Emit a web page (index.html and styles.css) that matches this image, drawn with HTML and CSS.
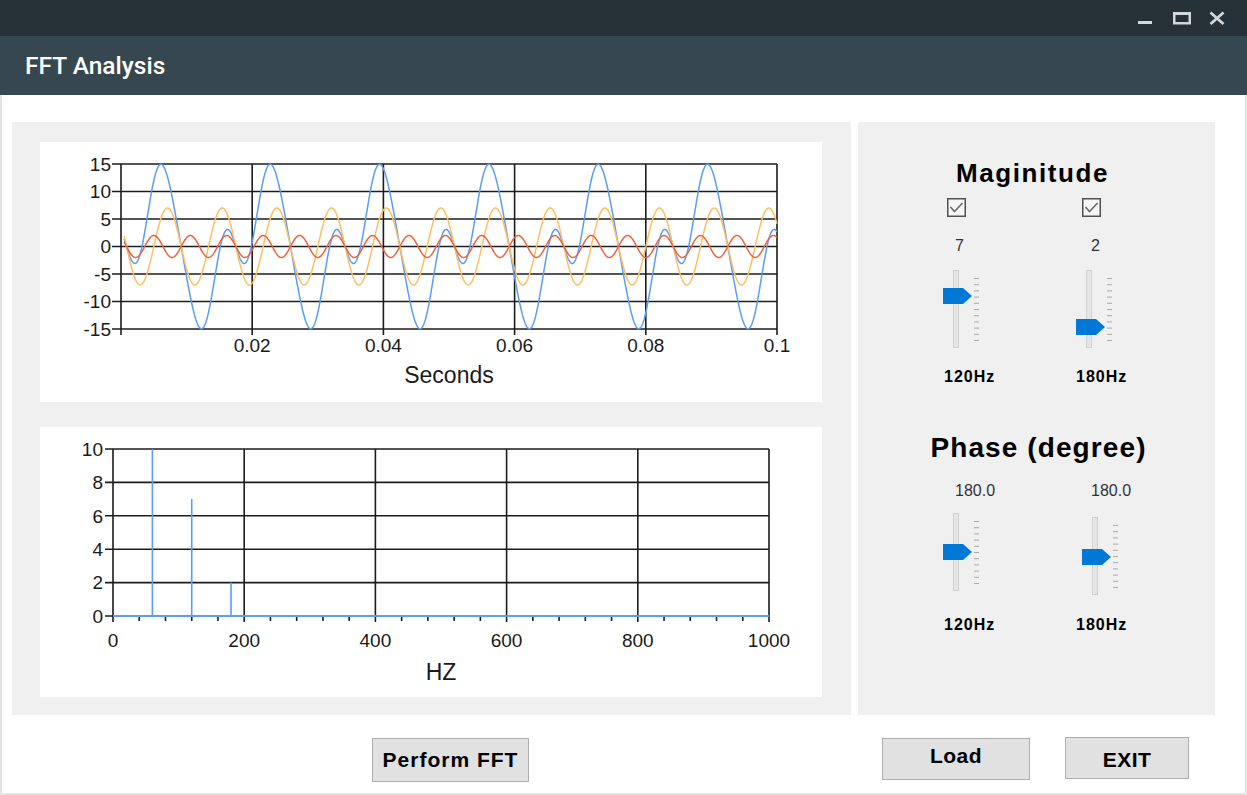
FILE: index.html
```html
<!DOCTYPE html>
<html lang="en">
<head>
<meta charset="utf-8">
<title>FFT Analysis</title>
<link rel="stylesheet" href="styles.css">
</head>
<body>
<div class="window">
  <div class="sysbar">
    <svg class="sys-icons" width="100" height="36" viewBox="0 0 100 36" aria-hidden="true">
      <rect x="8" y="21" width="14" height="3" fill="#d3d8da"/>
      <rect x="44.25" y="13.25" width="15.5" height="10" fill="none" stroke="#d3d8da" stroke-width="2.5"/>
      <rect x="43" y="12" width="18" height="3" fill="#d3d8da"/>
      <path d="M80.5 12.5L93.5 24M93.5 12.5L80.5 24" stroke="#d3d8da" stroke-width="2.8" fill="none"/>
    </svg>
  </div>
  <header class="titlebar">
    <h1 class="app-title">FFT Analysis</h1>
  </header>
  <main class="client">
    <div class="panels">
      <section class="charts">
        <div class="chart chart-time">
          <svg class="plot" width="782" height="260" viewBox="0 0 782 260">
            <g class="grid">
              <path d="M72 22H737M72 49.5H737M72 77H737M72 104.5H737M72 132H737M72 159.5H737M72 187H737"/>
              <path d="M81 22V193M212.2 22V193M343.4 22V193M474.6 22V193M605.8 22V193M737 22V193"/>
            </g>
            <g class="ylabels">
              <text x="71" y="28.8">15</text>
              <text x="71" y="56.3">10</text>
              <text x="71" y="83.8">5</text>
              <text x="71" y="111.3">0</text>
              <text x="71" y="138.8">-5</text>
              <text x="71" y="166.3">-10</text>
              <text x="71" y="193.8">-15</text>
            </g>
            <g class="xlabels">
              <text x="212.2" y="210">0.02</text>
              <text x="343.4" y="210">0.04</text>
              <text x="474.6" y="210">0.06</text>
              <text x="605.8" y="210">0.08</text>
              <text x="737" y="210">0.1</text>
            </g>
            <text class="axis-title" x="409" y="241">Seconds</text>
            <polyline id="wave-sum" class="wave wave-sum" points=""/>
            <polyline id="wave-120" class="wave wave-120" points=""/>
            <polyline id="wave-180" class="wave wave-180" points=""/>
          </svg>
        </div>
        <div class="chart chart-freq">
          <svg class="plot" width="782" height="270" viewBox="0 0 782 270">
            <g class="grid">
              <path d="M65 22H729M65 55.4H729M65 88.8H729M65 122.2H729M65 155.6H729M65 189H729"/>
              <path d="M73 22V195M204.2 22V195M335.4 22V195M466.6 22V195M597.8 22V195M729 22V195"/>
              <path id="minor-ticks" d=""/>
            </g>
            <g class="ylabels">
              <text x="63" y="28.8">10</text>
              <text x="63" y="62.2">8</text>
              <text x="63" y="95.6">6</text>
              <text x="63" y="129">4</text>
              <text x="63" y="162.4">2</text>
              <text x="63" y="195.8">0</text>
            </g>
            <g class="xlabels">
              <text x="73" y="220">0</text>
              <text x="204.2" y="220">200</text>
              <text x="335.4" y="220">400</text>
              <text x="466.6" y="220">600</text>
              <text x="597.8" y="220">800</text>
              <text x="729" y="220">1000</text>
            </g>
            <text class="axis-title" x="401" y="253">HZ</text>
            <path class="spectrum-base" d="M73 189H729"/>
            <path class="spectrum" d="M112.4 189V22M151.7 189V72.1M191 189V155.6"/>
          </svg>
        </div>
      </section>

      <aside class="controls">
        <h2 class="ctl-title mag-title">Maginitude</h2>
        <div class="ctl-grid">
          <div class="ctl-col col-a">
            <span class="check" role="checkbox" aria-checked="true">
              <svg width="19" height="19" viewBox="0 0 19 19"><rect x="0.75" y="0.75" width="17.5" height="17.5" fill="#f6f6f6" stroke="#505050" stroke-width="1.5"/><polyline points="3.5,9 7.5,13.5 15.5,5" fill="none" stroke="#6a6a6a" stroke-width="1.6"/></svg>
            </span>
            <span class="val val-mag">7</span>
            <svg class="slider slider-mag" width="37" height="80" viewBox="0 0 37 80">
              <rect class="track" x="10.5" y="0.5" width="5" height="77"/>
              <path class="ticks" d="M31 8.5h5M31 14.7h5M31 20.9h5M31 27.1h5M31 33.3h5M31 39.5h5M31 45.7h5M31 51.9h5M31 58.1h5M31 64.3h5M31 70.5h5"/>
              <polygon class="thumb" points="0,18 20,18 29,26 20,34 0,34"/>
            </svg>
            <span class="hz">120Hz</span>
          </div>
          <div class="ctl-col col-b">
            <span class="check" role="checkbox" aria-checked="true">
              <svg width="19" height="19" viewBox="0 0 19 19"><rect x="0.75" y="0.75" width="17.5" height="17.5" fill="#f6f6f6" stroke="#505050" stroke-width="1.5"/><polyline points="3.5,9 7.5,13.5 15.5,5" fill="none" stroke="#6a6a6a" stroke-width="1.6"/></svg>
            </span>
            <span class="val val-mag">2</span>
            <svg class="slider slider-mag" width="37" height="80" viewBox="0 0 37 80">
              <rect class="track" x="10.5" y="0.5" width="5" height="77"/>
              <path class="ticks" d="M31 8.5h5M31 14.7h5M31 20.9h5M31 27.1h5M31 33.3h5M31 39.5h5M31 45.7h5M31 51.9h5M31 58.1h5M31 64.3h5M31 70.5h5"/>
              <polygon class="thumb" points="0,49 20,49 29,57 20,65 0,65"/>
            </svg>
            <span class="hz">180Hz</span>
          </div>
        </div>

        <h2 class="ctl-title phase-title">Phase (degree)</h2>
        <div class="ctl-grid">
          <div class="ctl-col col-a">
            <span class="val val-phase">180.0</span>
            <svg class="slider slider-phase" width="37" height="80" viewBox="0 0 37 80">
              <rect class="track" x="10.5" y="0.5" width="5" height="77"/>
              <path class="ticks" d="M31 8.5h5M31 14.7h5M31 20.9h5M31 27.1h5M31 33.3h5M31 39.5h5M31 45.7h5M31 51.9h5M31 58.1h5M31 64.3h5M31 70.5h5"/>
              <polygon class="thumb" points="0,31 20,31 29,39 20,47 0,47"/>
            </svg>
            <span class="hz hz-phase">120Hz</span>
          </div>
          <div class="ctl-col col-b">
            <span class="val val-phase">180.0</span>
            <svg class="slider slider-phase" width="37" height="80" viewBox="0 0 37 80">
              <rect class="track" x="10.5" y="0.5" width="5" height="77"/>
              <path class="ticks" d="M31 8.5h5M31 14.7h5M31 20.9h5M31 27.1h5M31 33.3h5M31 39.5h5M31 45.7h5M31 51.9h5M31 58.1h5M31 64.3h5M31 70.5h5"/>
              <polygon class="thumb" points="0,32 20,32 29,40 20,48 0,48"/>
            </svg>
            <span class="hz hz-phase">180Hz</span>
          </div>
        </div>
      </aside>
    </div>

    <div class="footer">
      <button class="btn btn-fft" type="button">Perform FFT</button>
      <button class="btn btn-load" type="button">Load</button>
      <button class="btn btn-exit" type="button">EXIT</button>
    </div>
  </main>
</div>
<script src="script.js"></script>
</body>
</html>
```

FILE: styles.css
```css
* {
  box-sizing: border-box;
}

html, body {
  margin: 0;
  padding: 0;
  background: #ffffff;
}

body {
  font-family: "Liberation Sans", Arial, sans-serif;
  color: #000;
}

.window {
  width: 1247px;
  height: 795px;
  overflow: hidden;
  display: flex;
  flex-direction: column;
}

/* ---------- system bar ---------- */
.sysbar {
  height: 36px;
  background: #263238;
  display: flex;
  justify-content: flex-end;
  padding-right: 17px;
  flex: none;
}

.sys-icons {
  display: block;
}

/* ---------- title bar ---------- */
.titlebar {
  height: 59px;
  background: #37474f;
  padding-left: 25px;
  flex: none;
}

.app-title {
  margin: 0;
  font-family: Roboto, "Liberation Sans", sans-serif;
  font-weight: 500;
  font-size: 24.5px;
  line-height: 59px;
  color: #ffffff;
}

/* ---------- client area ---------- */
.client {
  flex: 1;
  background: #ffffff;
  border-left: 2px solid #e4e4e4;
  border-right: 2px solid #e4e4e4;
  border-bottom: 2px solid #e4e4e4;
  padding: 27px 0 0 10px;
}

.panels {
  display: flex;
  gap: 7px;
  height: 593px;
}

.charts {
  width: 839px;
  background: #f0f0f0;
  padding: 20px 0 0 28px;
}

.chart {
  width: 782px;
  background: #ffffff;
}

.chart-time {
  height: 260px;
}

.chart-freq {
  height: 270px;
  margin-top: 25px;
}

.plot {
  display: block;
  font-family: "Liberation Sans", Arial, sans-serif;
}

.grid path {
  fill: none;
  stroke: #1c1c1c;
  stroke-width: 1.6;
}

.ylabels text {
  font-size: 19px;
  fill: #1a1a1a;
  text-anchor: end;
}

.xlabels text {
  font-size: 19px;
  fill: #1a1a1a;
  text-anchor: middle;
}

.axis-title {
  font-size: 23px;
  fill: #1a1a1a;
  text-anchor: middle;
}

.wave {
  fill: none;
  stroke-width: 1.5;
  stroke-linejoin: round;
}

.wave-sum {
  stroke: #5b9cf5;
}

.wave-120 {
  stroke: #ffbf60;
}

.wave-180 {
  stroke: #ee623c;
}

.spectrum-base {
  fill: none;
  stroke: #5b9cf5;
  stroke-width: 2;
}

.spectrum {
  fill: none;
  stroke: #5b9cf5;
  stroke-width: 1.6;
}

/* ---------- controls panel ---------- */
.controls {
  width: 357px;
  background: #f0f0f0;
  padding-top: 36px;
  display: flex;
  flex-direction: column;
}

.ctl-title {
  margin: 0;
  text-align: center;
  font-weight: bold;
  color: #000;
}

.mag-title {
  font-size: 26px;
  line-height: 30px;
  letter-spacing: 1.6px;
  padding-right: 8px;
}

.phase-title {
  font-size: 28px;
  line-height: 32px;
  letter-spacing: 1.1px;
  margin-top: 45px;
  padding-left: 4px;
}

.ctl-grid {
  display: grid;
  grid-template-columns: 134px 134px;
  padding-left: 80px;
}

.ctl-col {
  display: flex;
  flex-direction: column;
  align-items: flex-start;
}

.check {
  display: block;
  width: 19px;
  height: 19px;
  margin-top: 10px;
}

.check svg {
  display: block;
}

.col-a .check { margin-left: 9px; }
.col-b .check { margin-left: 10px; }

.val {
  font-size: 16px;
  line-height: 20px;
  color: #33303c;
}

.val-mag { margin-top: 19px; }
.val-phase { margin-top: 17px; }

.col-a .val { margin-left: 17px; }
.col-b .val { margin-left: 19px; }

.slider {
  display: block;
}

.slider .track {
  fill: #e6e6e6;
  stroke: #d0d0d0;
  stroke-width: 1;
}

.slider .ticks {
  fill: none;
  stroke: #a9a9a9;
  stroke-width: 1;
}

.slider .thumb {
  fill: #0078d7;
}

.slider-mag { margin-top: 14px; }
.col-a .slider-mag { margin-left: 5px; }
.col-b .slider-mag { margin-left: 4px; }

.col-a .slider-phase { margin-top: 12px; margin-left: 5px; }
.col-b .slider-phase { margin-top: 16px; margin-left: 10px; }

.hz {
  font-size: 16px;
  line-height: 20px;
  font-weight: bold;
  letter-spacing: 1px;
  margin-top: 17px;
}

.col-a .hz { margin-left: 6px; }
.col-b .hz { margin-left: 4px; }

.col-a .hz-phase { margin-top: 22px; }
.col-b .hz-phase { margin-top: 18px; }

/* ---------- footer buttons ---------- */
.footer {
  display: flex;
  align-items: flex-start;
}

.btn {
  display: flex;
  align-items: center;
  justify-content: center;
  background: #e1e1e1;
  border: 1px solid #adadad;
  border-radius: 0;
  font-family: "Liberation Sans", Arial, sans-serif;
  font-weight: bold;
  font-size: 21px;
  letter-spacing: 0.4px;
  color: #000;
  padding: 0;
}

.btn-fft {
  width: 157px;
  height: 44px;
  margin-top: 23px;
  margin-left: 360px;
  letter-spacing: 1px;
}

.btn-load {
  width: 148px;
  height: 42px;
  margin-top: 23px;
  margin-left: 353px;
  padding-bottom: 6px;
}

.btn-exit {
  width: 124px;
  height: 42px;
  margin-top: 22px;
  margin-left: 35px;
  padding-top: 4px;
}
```

FILE: script.js
```js
(function () {
  var ORIGIN = 86.5;   // x (svg units) where the sampled time series starts its phase
  var PX = 6560;       // pixels per second on the time axis
  var MID = 104.5;     // y of the zero line
  var SY = 5.5;        // pixels per unit on the value axis
  var W = 2 * Math.PI;

  function f120(t) { return -7 * Math.sin(W * 120 * t); }
  function f180(t) { return -2 * Math.sin(W * 180 * t); }
  function fsum(t) { return 10 * Math.sin(W * 60 * t) + f120(t) + f180(t); }

  function build(fn) {
    var pts = [];
    for (var x = 84; x <= 737.01; x += 0.5) {
      var t = (x - ORIGIN) / PX;
      pts.push(x.toFixed(1) + ',' + (MID - fn(t) * SY).toFixed(2));
    }
    return pts.join(' ');
  }

  function set(id, pts) {
    var el = document.getElementById(id);
    if (el) { el.setAttribute('points', pts); }
  }

  set('wave-sum', build(fsum));
  set('wave-120', build(f120));
  set('wave-180', build(f180));

  // minor ticks on the frequency axis every 40 Hz
  var d = '';
  for (var k = 1; k < 25; k++) {
    if (k % 5 === 0) { continue; }
    var x = 73 + k * 26.24;
    d += 'M' + x.toFixed(2) + ' 189V194';
  }
  var mt = document.getElementById('minor-ticks');
  if (mt) { mt.setAttribute('d', d); }
})();
```
